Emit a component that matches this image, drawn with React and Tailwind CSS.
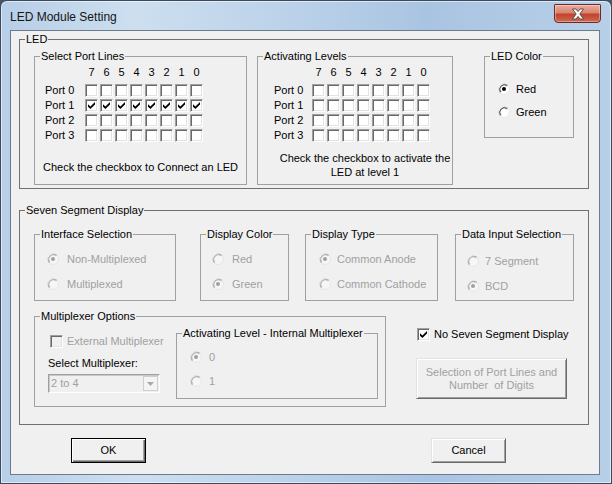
const bits = [7, 6, 5, 4, 3, 2, 1, 0]
const ports = [0, 1, 2, 3]

function Group({ label, dark, className = '', children }) {
  return (
    <div className={`relative shrink-0 border ${dark ? 'border-[#707070]' : 'border-[#a0a0a0]'} ${className}`}>
      <span className="absolute -top-[8px] left-[5px] bg-[#f0f0f0] px-[1px] leading-[14px] text-black whitespace-nowrap">
        {label}
      </span>
      {children}
    </div>
  )
}

function Check({ checked, disabled }) {
  return (
    <span
      className={`flex h-[13px] w-[13px] shrink-0 items-center justify-center border border-t-[#a0a0a0] border-l-[#a0a0a0] border-b-white border-r-white shadow-[inset_1px_1px_0_#696969,inset_-1px_-1px_0_#e3e3e3] ${
        disabled ? 'bg-[#f0f0f0]' : 'bg-white'
      }`}
    >
      {checked && (
        <svg width="7" height="7" viewBox="0 0 7 7">
          <path d="M0 2.2 L2.4 4.5 L7 0 V2.6 L2.4 7 L0 4.8 Z" fill="#000" />
        </svg>
      )}
    </span>
  )
}

function Radio({ checked, disabled }) {
  return (
    <svg width="12" height="12" viewBox="0 0 12 12" className="shrink-0">
      <circle cx="6" cy="6" r="5.5" fill={disabled ? '#f6f6f6' : '#fff'} stroke="#e6e6e6" />
      <path d="M2.2 9.8 A5.5 5.5 0 0 1 9.8 2.2" fill="none" stroke="#a0a0a0" />
      <path d="M2.9 9.1 A4.4 4.4 0 0 1 9.1 2.9" fill="none" stroke={disabled ? '#c4c4c4' : '#555'} />
      {checked && <circle cx="6" cy="6" r="2" fill={disabled ? '#a0a0a0' : '#000'} />}
    </svg>
  )
}

function RadioRow({ label, checked, disabled, gap = 'gap-[6px]' }) {
  return (
    <div className={`flex h-[14px] items-center ${gap} ${disabled ? 'text-[#a0a0a0]' : 'text-black'}`}>
      <Radio checked={checked} disabled={disabled} />
      <span className="whitespace-nowrap">{label}</span>
    </div>
  )
}

function PortGrid({ checkedRow, labelClass }) {
  return (
    <div className="mt-[9px]">
      <div className="flex leading-[13px]">
        <div className={labelClass} />
        <div className="flex gap-[2px]">
          {bits.map((b) => (
            <span key={b} className="w-[13px] text-center">
              {b}
            </span>
          ))}
        </div>
      </div>
      <div className="mt-[5px] flex flex-col gap-[2px]">
        {ports.map((p) => (
          <div key={p} className="flex items-center leading-[13px]">
            <span className={`${labelClass} whitespace-nowrap`}>Port {p}</span>
            <div className="flex gap-[2px]">
              {bits.map((b) => (
                <Check key={b} checked={p === checkedRow} />
              ))}
            </div>
          </div>
        ))}
      </div>
    </div>
  )
}

function WinButton({ children, isDefault, disabled, className = '' }) {
  return (
    <button
      type="button"
      className={`flex items-center justify-center bg-[#f0f0f0] leading-[13px] ${
        isDefault
          ? 'border border-black shadow-[inset_1px_1px_0_#fff,inset_-1px_-1px_0_#696969,inset_-2px_-2px_0_#a0a0a0]'
          : 'border border-t-[#e3e3e3] border-l-[#e3e3e3] border-b-[#696969] border-r-[#696969] shadow-[inset_1px_1px_0_#fff,inset_-1px_-1px_0_#a0a0a0]'
      } ${disabled ? 'text-[#a0a0a0]' : 'text-black'} ${className}`}
    >
      {children}
    </button>
  )
}

export default function App() {
  return (
    <div className="h-[484px] w-[612px] overflow-hidden bg-[#4a5560] font-['Liberation_Sans',Arial,sans-serif] text-[11px] text-black">
      <div className="flex h-full flex-col rounded-t-[7px] border border-[#3a4b5e] bg-[linear-gradient(90deg,#b7cee8_0%,#cddfef_22%,#bdd3ea_45%,#a9c4e2_70%,#b8cfe8_100%)] shadow-[inset_0_0_0_1px_rgba(255,255,255,0.55)]">
        {/* title bar */}
        <div className="flex h-[29px] items-start justify-between pr-[10px]">
          <span className="pl-[9px] pt-[9px] text-[12px] leading-[15px] text-[#141414]">LED Module Setting</span>
          <div className="mt-[3px] flex h-[19px] w-[47px] items-center justify-center rounded-b-[4px] rounded-t-[1px] border border-[#6b2b22] bg-[linear-gradient(180deg,#e9ad9f_0%,#d98470_45%,#c2432c_55%,#cf6a52_100%)] shadow-[inset_0_0_0_1px_rgba(255,255,255,0.35)]">
            <svg width="14" height="12" viewBox="0 0 14 12">
              <path
                d="M1.5 1 H5 L7 3.6 L9 1 H12.5 L8.8 6 L12.5 11 H9 L7 8.4 L5 11 H1.5 L5.2 6 Z"
                fill="#fff"
                stroke="#4a4a4a"
                strokeWidth="0.9"
                strokeLinejoin="round"
              />
            </svg>
          </div>
        </div>

        {/* client area */}
        <div className="ml-[9px] h-[445px] w-[590px] border border-[#6d7c8c] bg-[#f0f0f0] pl-[8px] pt-[8px]">
          <Group label="LED" dark className="h-[150px] w-[570px]">
            <div className="flex items-start pl-[14px] pt-[16px]">
              <Group label="Select Port Lines" className="h-[129px] w-[213px]">
                <PortGrid checkedRow={1} labelClass="w-[50px] pl-[10px]" />
                <p className="mt-[19px] whitespace-nowrap pl-[8px] leading-[13px]">Check the checkbox to Connect an LED</p>
              </Group>

              <Group label="Activating Levels" className="ml-[10px] h-[129px] w-[196px]">
                <PortGrid checkedRow={-1} labelClass="w-[54px] pl-[16px]" />
                <p className="ml-[21px] mt-[9px] w-[172px] whitespace-nowrap text-center leading-[14px]">
                  Check the checkbox to activate the
                  <br />
                  LED at level 1
                </p>
              </Group>

              <Group label="LED Color" className="ml-[31px] h-[82px] w-[90px]">
                <div className="flex flex-col gap-[9px] pl-[13px] pt-[25px]">
                  <RadioRow label="Red" checked />
                  <RadioRow label="Green" />
                </div>
              </Group>
            </div>
          </Group>

          <Group label="Seven Segment Display" dark className="mt-[21px] h-[215px] w-[570px]">
            <div className="pl-[14px] pt-[23px]">
              <div className="flex items-start">
                <Group label="Interface Selection" className="h-[67px] w-[142px]">
                  <div className="flex flex-col gap-[11px] pl-[12px] pt-[17px]">
                    <RadioRow label="Non-Multiplexed" checked disabled gap="gap-[8px]" />
                    <RadioRow label="Multiplexed" disabled gap="gap-[8px]" />
                  </div>
                </Group>
                <Group label="Display Color" className="ml-[24px] h-[67px] w-[89px]">
                  <div className="flex flex-col gap-[11px] pl-[11px] pt-[17px]">
                    <RadioRow label="Red" disabled gap="gap-[8px]" />
                    <RadioRow label="Green" checked disabled gap="gap-[8px]" />
                  </div>
                </Group>
                <Group label="Display Type" className="ml-[16px] h-[67px] w-[133px]">
                  <div className="flex flex-col gap-[11px] pl-[13px] pt-[17px]">
                    <RadioRow label="Common Anode" checked disabled />
                    <RadioRow label="Common Cathode" disabled />
                  </div>
                </Group>
                <Group label="Data Input Selection" className="ml-[17px] h-[67px] w-[119px]">
                  <div className="flex flex-col gap-[11px] pl-[11px] pt-[19px]">
                    <RadioRow label="7 Segment" disabled />
                    <RadioRow label="BCD" checked disabled />
                  </div>
                </Group>
              </div>

              <div className="mt-[15px] flex items-start">
                <Group label="Multiplexer Options" className="h-[91px] w-[352px]">
                  <div className="flex items-start">
                    <div className="w-[141px] shrink-0 pl-[13px] pt-[18px]">
                      <div className="ml-[2px] flex items-center gap-[4px] text-[#a0a0a0]">
                        <Check disabled />
                        <span className="whitespace-nowrap leading-[13px]">External Multiplexer</span>
                      </div>
                      <p className="mt-[9px] whitespace-nowrap leading-[13px]">Select Multiplexer:</p>
                      <div className="mt-[4px] flex h-[19px] w-[112px] items-center border border-t-[#a0a0a0] border-l-[#a0a0a0] border-b-white border-r-white bg-[#f0f0f0] shadow-[inset_1px_1px_0_#c8c8c8]">
                        <span className="flex-1 pl-[2px] text-[#a0a0a0]">2 to 4</span>
                        <span className="mr-px flex h-[15px] w-[15px] items-center justify-center border border-[#cfcfcf] bg-[#f4f4f4]">
                          <svg width="7" height="4" viewBox="0 0 7 4">
                            <path d="M0 0 H7 L3.5 4 Z" fill="#a8a8a8" />
                          </svg>
                        </span>
                      </div>
                    </div>
                    <Group label="Activating Level - Internal Multiplexer" className="mt-[16px] h-[66px] w-[202px]">
                      <div className="flex flex-col gap-[10px] pl-[13px] pt-[16px]">
                        <RadioRow label="0" checked disabled gap="gap-[7px]" />
                        <RadioRow label="1" disabled gap="gap-[7px]" />
                      </div>
                    </Group>
                  </div>
                </Group>

                <div className="ml-[30px] pt-[12px]">
                  <div className="ml-[1px] flex items-center gap-[4px]">
                    <Check checked />
                    <span className="whitespace-nowrap leading-[13px]">No Seven Segment Display</span>
                  </div>
                  <WinButton disabled className="mt-[17px] h-[41px] w-[151px] whitespace-pre text-center">
                    {'Selection of Port Lines and\nNumber  of Digits'}
                  </WinButton>
                </div>
              </div>
            </div>
          </Group>

          <div className="mt-[13px] flex gap-[285px] pl-[52px]">
            <WinButton isDefault className="h-[25px] w-[75px]">
              OK
            </WinButton>
            <WinButton className="h-[25px] w-[75px]">Cancel</WinButton>
          </div>
        </div>
      </div>
    </div>
  )
}
